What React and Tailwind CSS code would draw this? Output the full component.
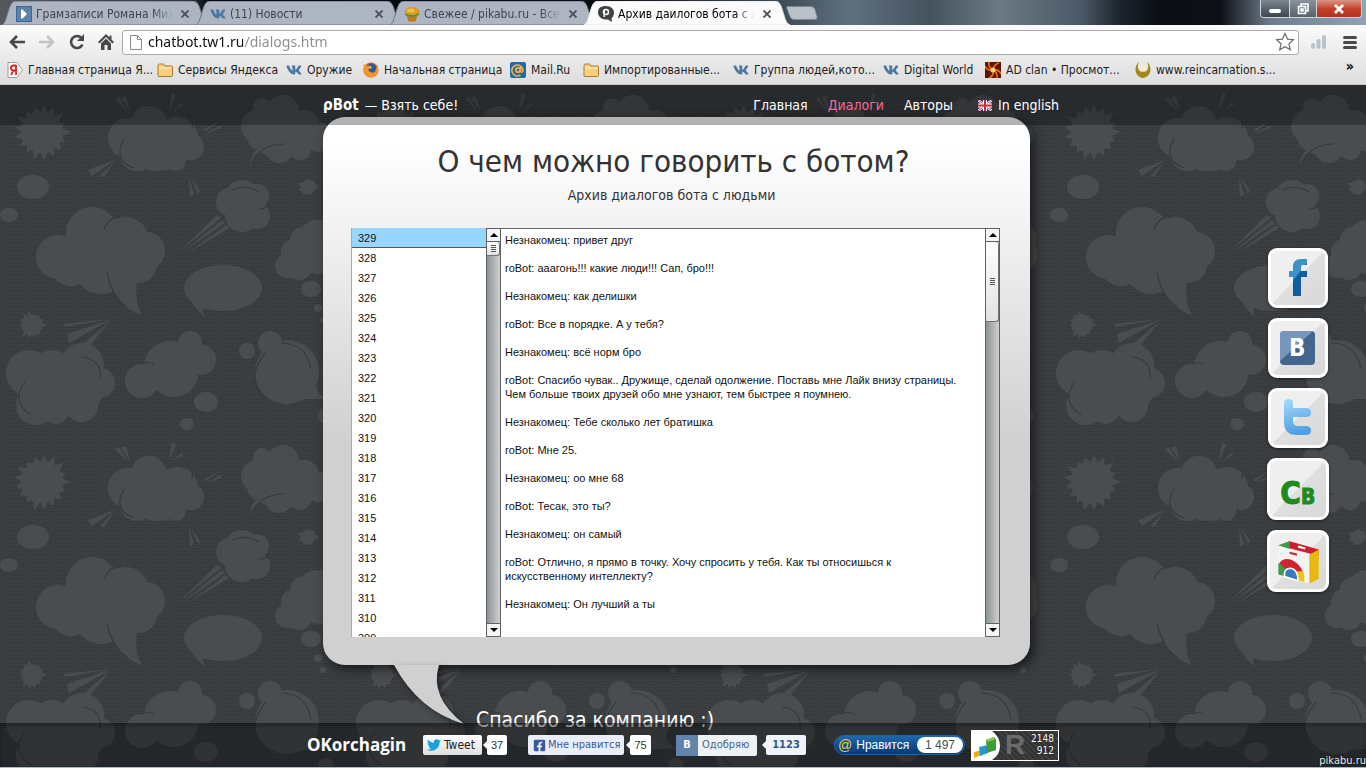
import { useState } from "react";
import clsx from "clsx";
import { FaVk, FaTwitter, FaFacebookSquare } from "react-icons/fa";

const tabs = [
  { title: "Грамзаписи Романа Михайлова", icon: "play" },
  { title: "(11) Новости", icon: "vk" },
  { title: "Свежее / pikabu.ru - Все", icon: "cake" },
  { title: "Архив даилогов бота с людьми", icon: "chat", active: true },
];

const bookmarks = [
  { title: "Главная страница Я...", icon: "yandex", width: "w-[150px]" },
  { title: "Сервисы Яндекса", icon: "folder", width: "w-[129px]" },
  { title: "Оружие", icon: "vk", width: "w-[77px]" },
  { title: "Начальная страница", icon: "firefox", width: "w-[147px]" },
  { title: "Mail.Ru", icon: "mail", width: "w-[73px]" },
  { title: "Импортированные...", icon: "folder", width: "w-[150px]" },
  { title: "Группа людей,кото...", icon: "vk", width: "w-[150px]" },
  { title: "Digital World", icon: "vk", width: "w-[102px]" },
  { title: "AD clan • Просмот...", icon: "fire", width: "w-[150px]" },
  { title: "www.reincarnation.s...", icon: "wreath", width: "w-[150px]" },
];

const dialogs = Array.from({ length: 21 }, (_, i) => 329 - i);

const messages = [
  "Незнакомец: привет друг",
  "roBot: ааагонь!!! какие люди!!! Сап, бро!!!",
  "Незнакомец: как делишки",
  "roBot: Все в порядке. А у тебя?",
  "Незнакомец: всё норм бро",
  "roBot: Спасибо чувак.. Дружище, сделай одолжение. Поставь мне Лайк внизу страницы. Чем больше твоих друзей обо мне узнают, тем быстрее я поумнею.",
  "Незнакомец: Тебе сколько лет братишка",
  "roBot: Мне 25.",
  "Незнакомец: оо мне 68",
  "roBot: Тесак, это ты?",
  "Незнакомец: он самый",
  "roBot: Отлично, я прямо в точку. Хочу спросить у тебя. Как ты относишься к искусственному интеллекту?",
  "Незнакомец: Он лучший а ты",
];

export default function App() {
  return (
    <div className="flex min-h-screen flex-col overflow-hidden bg-[#3a3f42] font-['DejaVu_Sans_Condensed','Noto_Sans',sans-serif]">
      <TabStrip />
      <Toolbar />
      <BookmarksBar />
      <div className="relative flex-1 overflow-hidden border-b border-[#a9b6cc]">
        <Wallpaper />
        <main className="relative mx-auto max-w-[752px] pt-8">
          <Bubble />
        </main>
        <SiteHeader />
        <ShareLinks />
        <SiteFooter />
        <span className="absolute right-0 bottom-0 text-[11px] leading-3 text-[#eee] [text-shadow:0_0_2px_#000]">
          pikabu.ru
        </span>
      </div>
    </div>
  );
}

function TabStrip() {
  return (
    <div className="flex h-[25px] bg-[linear-gradient(90deg,#55585c_0,#30343a_190px,#05070d_210px,#0a0d14_590px,#3d4b57_780px,#5f7080_850px,#46535f_930px,#6c7882_1000px,#4c5a68_1080px,#1c242d_1120px,#0a0e13_1160px,#0d1014_1220px,#6d7c8d_1270px,#8fa3b8_100%)] pl-[2px]">
      <div className="flex min-w-0">
        {tabs.map((tab) => (
          <Tab key={tab.title} {...tab} />
        ))}
      </div>
      <button aria-label="Новая вкладка" className="mt-[6px] ml-2 h-[14px] w-8">
        <svg viewBox="0 0 32 14" className="size-full">
          <path d="M2 .5h23q3 0 4 3l2 7q1 3-2 3H8q-3 0-4-3L1 3Q0 .5 2 .5z" fill="#b9c0c8" stroke="#7b8790" />
        </svg>
      </button>
      <div className="mr-1 ml-auto flex h-[18px] overflow-hidden rounded-b border border-t-0 border-[#cfd6dd]">
        <button aria-label="Свернуть" className="flex w-7 items-center justify-center bg-linear-to-b from-[#7e8791] to-[#3c444d]">
          <span className="mt-1 h-1 w-3 rounded-xs bg-white" />
        </button>
        <button aria-label="Восстановить" className="flex w-7 items-center justify-center border-x border-[#cfd6dd] bg-linear-to-b from-[#8a939b] to-[#59626b]">
          <svg viewBox="0 0 12 12" className="size-3" fill="none" stroke="#fff" strokeWidth="1.6">
            <path d="M4 3V1h7v7H9" />
            <path d="M1.5 3.5h7v7h-7zM4 6h2v2H4z" />
          </svg>
        </button>
        <button aria-label="Закрыть" className="flex w-11 items-center justify-center bg-linear-to-b from-[#dc9483] via-[#c4422a] to-[#b23420]">
          <svg viewBox="0 0 12 10" className="h-[10px] w-3" stroke="#fff" strokeWidth="2.8">
            <path d="M2 1l8 8M10 1L2 9" />
          </svg>
        </button>
      </div>
    </div>
  );
}

function Tab({ title, icon, active }) {
  return (
    <div className={clsx("relative h-full w-[194px]", active && "z-10")}>
      <svg viewBox="0 0 206 24" preserveAspectRatio="none" className="absolute top-[1px] left-0 h-6 w-[206px]">
        <path
          d="M0 24C5 22 6 4 11 1Q12 0 15 0H191Q195 0 197 5C201 16 201 22 206 24Z"
          fill={active ? "#fbfbfb" : "#acb5c1"}
          stroke={active ? "#dfe2e5" : "#6e7781"}
        />
      </svg>
      <div className="relative flex h-full items-center pt-[2px] pl-[14px]">
        <SmallIcon name={icon} />
        <span
          className={clsx(
            "ml-1 w-[137px] overflow-hidden mask-r-from-85% text-xs whitespace-nowrap",
            active ? "text-black" : "text-[#3f454d]"
          )}
        >
          {title}
        </span>
        <button aria-label="Закрыть вкладку" className="ml-2">
          <svg viewBox="0 0 8 8" className="size-2" stroke="#494f57" strokeWidth="1.8">
            <path d="M.5.5l7 7M7.5.5l-7 7" />
          </svg>
        </button>
      </div>
    </div>
  );
}

function Toolbar() {
  return (
    <div className="flex h-[34px] items-center bg-linear-to-b from-[#fbfbfb] to-[#e9e9e9] pr-[9px] pl-2">
      <button aria-label="Назад" className="mr-3">
        <svg viewBox="0 0 18 16" className="h-4 w-[18px]" fill="none" stroke="#484848" strokeWidth="2.6">
          <path d="M9 2L3 8l6 6M3 8h14" />
        </svg>
      </button>
      <button aria-label="Вперёд" className="mr-3">
        <svg viewBox="0 0 18 16" className="h-4 w-[18px]" fill="none" stroke="#c3c3c3" strokeWidth="2.6">
          <path d="M9 2l6 6-6 6M15 8H1" />
        </svg>
      </button>
      <button aria-label="Обновить" className="mr-3">
        <svg viewBox="0 0 18 18" className="size-[18px]">
          <path d="M13.5 5A6 6 0 1 0 14.5 11.5" fill="none" stroke="#484848" strokeWidth="2.6" />
          <path d="M16 1v7H9z" fill="#484848" />
        </svg>
      </button>
      <button aria-label="Домой" className="mr-2">
        <svg viewBox="0 0 16 16" className="size-4" fill="#484848">
          <path d="M8 0L0 8l1.500 1.400L8 3l6.500 6.400L16 8l-2.500-2.500V1.500h-2v2z" />
          <path d="M8 4.500L3 9.500V16h3.500v-5h3v5H13V9.500z" />
        </svg>
      </button>
      <label className="flex h-[25px] flex-1 items-center rounded-[3px] border border-[#aaaaaa] bg-white px-[7px]">
        <svg viewBox="0 0 12 15" className="mr-1 h-[15px] w-3" fill="#fff" stroke="#8a8a8a">
          <path d="M.5.5h7l4 4v10H.5zM7.500.5v4h4" />
        </svg>
        <input
          aria-label="Адрес"
          defaultValue="chatbot.tw1.ru/dialogs.htm"
          className="min-w-0 flex-1 bg-[linear-gradient(90deg,#111_97px,#8c8c8c_97px)] bg-clip-text pl-[2px] font-['Noto_Sans',sans-serif] text-[14px] leading-5 text-transparent outline-none"
        />
        <svg viewBox="0 0 20 20" className="-mr-1 size-5" fill="#fff" stroke="#6c6c6c" strokeWidth="1.2">
          <path d="M10 1.500l2.500 5.600 6 .6-4.500 4.100 1.300 6L10 14.700l-5.300 3.100 1.300-6L1.500 7.700l6-.6z" />
        </svg>
      </label>
      <svg viewBox="0 0 16 14" className="ml-3 h-[14px] w-4" fill="#b9c2cb">
        <rect x="0" y="8" width="4" height="6" rx="2" />
        <rect x="5.500" y="4" width="4" height="10" rx="2" />
        <rect x="11" y="0" width="4" height="14" rx="2" />
      </svg>
      <button aria-label="Меню" className="ml-4 flex w-[14px] flex-col gap-[2px]">
        <span className="h-[3px] rounded-xs bg-[#4b4b4b]" />
        <span className="h-[3px] rounded-xs bg-[#4b4b4b]" />
        <span className="h-[3px] rounded-xs bg-[#4b4b4b]" />
      </button>
    </div>
  );
}

function BookmarksBar() {
  return (
    <nav className="flex h-[26px] items-center border-b border-[#c9c9c9] bg-linear-to-b from-[#e9e9e9] to-[#dedede] pb-[3px] pl-[7px]">
      {bookmarks.map((b) => (
        <a key={b.title} href="#" className={clsx("flex shrink-0 items-center gap-[5px] text-xs whitespace-nowrap text-[#1c1c1c]", b.width)}>
          <SmallIcon name={b.icon} />
          {b.title}
        </a>
      ))}
      <button aria-label="Другие закладки" className="mr-3 ml-auto pb-2 text-sm leading-none font-bold">
        »
      </button>
    </nav>
  );
}

function SmallIcon({ name }) {
  if (name === "vk") return <FaVk className="size-4 shrink-0 text-[#4d76a1]" />;
  return (
    <svg viewBox="0 0 16 16" className="size-4 shrink-0">
      {name === "play" && (
        <>
          <rect x=".5" y=".5" width="15" height="15" fill="#5a82ab" stroke="#3e668f" />
          <path d="M5 3.500l1.500 0 4.500 4.500-4.500 4.500H5z" fill="#fff" />
        </>
      )}
      {name === "cake" && (
        <>
          <path d="M2 8h12l-2.500 7.500h-7z" fill="#b97a23" />
          <ellipse cx="8" cy="6" rx="7.500" ry="5" fill="#d99a2b" />
          <path d="M1 8q7 4 14 0" stroke="#4c9a2a" strokeWidth="2" fill="none" />
          <ellipse cx="7" cy="4.500" rx="4" ry="2" fill="#efc04e" />
        </>
      )}
      {name === "chat" && (
        <>
          <path d="M8 0c5 0 8 3 8 6.500S14 12 13.500 12.500L14 16l-4-2.500C4 14 0 11 0 6.500S3 0 8 0z" fill="#3e4345" />
          <circle cx="8" cy="6" r="2.500" fill="none" stroke="#fff" strokeWidth="1.500" />
          <path d="M6.200 5v6" stroke="#fff" strokeWidth="1.500" />
        </>
      )}
      {name === "yandex" && (
        <>
          <path d="M1 .5h9l5.500 7.500-5.500 7.500H1z" fill="#fff" stroke="#9c9c9c" />
          <path d="M9 3v10M9 3.500H6.500a2.500 2.500 0 0 0 0 5H9M6.500 8.500L4 13" fill="none" stroke="#e0201c" strokeWidth="1.800" />
        </>
      )}
      {name === "folder" && (
        <>
          <path d="M1 3.500q0-1.500 1.500-1.500h4l1.500 2h6.500q1 0 1 1v8.500q0 1-1 1H2q-1 0-1-1z" fill="#f8d07c" stroke="#a87a34" />
          <path d="M2 6h12.500" stroke="#fff0c4" />
        </>
      )}
      {name === "firefox" && (
        <>
          <circle cx="8" cy="8" r="7.500" fill="#d9641a" />
          <circle cx="8.500" cy="6.500" r="5" fill="#2b5d9b" />
          <path d="M1 2l3 2q3-1 4 1l-3 3q3 4 7 2l2-6q3 5-1 9T4 14Q0 11 .5 6z" fill="#f0962a" />
          <path d="M6 4l3 1-2 2z" fill="#fbd34c" />
        </>
      )}
      {name === "mail" && (
        <>
          <rect width="16" height="16" rx="2" fill="#1f6aa8" />
          <circle cx="8" cy="8" r="2.200" fill="none" stroke="#f5b13c" strokeWidth="1.800" />
          <path d="M10.500 5v4.200q1 2 2.300.2A5.500 5.500 0 1 0 10.500 13" fill="none" stroke="#f5b13c" strokeWidth="1.600" />
        </>
      )}
      {name === "fire" && (
        <>
          <rect width="16" height="16" fill="#5e1403" />
          <g fill="none" stroke="#e87410" strokeWidth="1.600">
            <path d="M8 8Q9 2 14 1M8 8q6-1 8 4M8 8q1 6-4 8M8 8Q2 9 0 4M8 8Q3 5 4 0M8 8q5 3 4 8" />
          </g>
          <circle cx="8" cy="8" r="2.500" fill="#ffd264" />
        </>
      )}
      {name === "wreath" && (
        <>
          <path d="M4 0C-2 5 0 15 8 16 16 15 18 5 12 0q3 6-1 9.500H5Q1 6 4 0z" fill="#a1871c" />
          <circle cx="8" cy="6" r="3.500" fill="#f3eccf" />
          <path d="M5 10h6v3H5z" fill="#a1871c" />
        </>
      )}
    </svg>
  );
}

// star-like blot used on the wallpaper
const burst = (cx, cy, inner, outer, count) =>
  Array.from({ length: count * 2 }, (_, i) => {
    const r = i % 2 ? inner : outer - ((i * 7) % 5);
    const a = (Math.PI * i) / count;
    return `${(cx + r * Math.cos(a)).toFixed(1)},${(cy + r * Math.sin(a)).toFixed(1)}`;
  }).join(" ");

function Wallpaper() {
  return (
    <svg aria-hidden="true" className="absolute inset-0 size-full">
      <defs>
        <pattern id="weave" width="3" height="4" patternUnits="userSpaceOnUse">
          <rect width="3" height="4" fill="#3d4144" />
          <path d="M0 .5h2M1.500 2.500H3M0 2.500h.5" stroke="#323639" />
        </pattern>
        <pattern id="clouds" width="350" height="350" patternUnits="userSpaceOnUse">
          <g fill="#4a4d50">
            <polygon points={burst(42, 47, 20, 29, 17)} />
            <circle cx="42" cy="47" r="21" />
            {/* puffy cloud with rays */}
            <circle cx="128" cy="53" r="20" />
            <circle cx="149" cy="39" r="18" />
            <circle cx="177" cy="53" r="21" />
            <circle cx="191" cy="62" r="13" />
            <circle cx="137" cy="69" r="17" />
            <ellipse cx="158" cy="64" rx="32" ry="22" />
            <circle cx="176" cy="76" r="10" />
            <path d="M115 14l13 13-9-15zM121 13l9 13-4-15zM172 7l-3 19 7-16zM181 18l-9 9 12-8zM203 45l18-10-15 11zM206 48l15-8v3zM88 85l27-10-23 16zM100 91l14-14-10 15zM189 93l1 19 4-3zM191 93l7 16 2-3z" />
            {/* cloud with a hook */}
            <circle cx="262" cy="22" r="9" />
            <circle cx="283" cy="26" r="16" />
            <circle cx="257" cy="41" r="16" />
            <circle cx="304" cy="40" r="15" />
            <circle cx="318" cy="52" r="15" />
            <ellipse cx="283" cy="52" rx="36" ry="20" />
            <circle cx="279" cy="64" r="14" />
            <circle cx="300" cy="64" r="11" />
            <path d="M250 82q0-20 20-22l-6 4q-12 5-14 18z" />
            <ellipse cx="33" cy="102" rx="16" ry="12" />
            <ellipse cx="9" cy="130" rx="9" ry="7" />
            {/* large speech cloud */}
            <circle cx="92" cy="148" r="26" />
            <circle cx="58" cy="172" r="22" />
            <circle cx="125" cy="156" r="24" />
            <circle cx="146" cy="166" r="19" />
            <circle cx="138" cy="179" r="19" />
            <circle cx="71" cy="180" r="21" />
            <ellipse cx="101" cy="182" rx="27" ry="27" />
            <path d="M107 188q8 34 35 42-8-12-5-34z" />
            {/* flying puff */}
            <circle cx="242" cy="112" r="17" />
            <circle cx="230" cy="117" r="14" />
            <circle cx="257" cy="111" r="12" />
            <circle cx="257" cy="131" r="13" />
            <circle cx="242" cy="130" r="17" />
            <path d="M180 166l37-36 4 3zM183 167l39-32 3 3zM188 168l38-28 3 3z" />
            <polygon points={burst(308, 102, 7, 11, 9)} />
            {/* thought cloud */}
            <circle cx="317" cy="154" r="19" />
            <circle cx="303" cy="155" r="13" />
            <circle cx="294" cy="167" r="13" />
            <circle cx="287" cy="181" r="12" />
            <circle cx="299" cy="182" r="13" />
            <circle cx="318" cy="170" r="19" />
            <ellipse cx="311" cy="204" rx="10" ry="8" />
            <circle cx="318" cy="223" r="4" />
            <circle cx="323" cy="235" r="3" />
            <ellipse cx="223" cy="203" rx="39" ry="23" />
            <path d="M190 213q6 12 15 19-3-5-1-14z" />
            <polygon points={burst(32, 240, 10, 15, 14)} />
            <path d="M64 239l47-5-46 8zM67 249l43-14-41 23zM83 259l27-23-21 26z" />
            {/* lower clouds */}
            <circle cx="29" cy="288" r="23" />
            <circle cx="52" cy="283" r="18" />
            <circle cx="82" cy="280" r="22" />
            <circle cx="100" cy="298" r="15" />
            <circle cx="36" cy="320" r="20" />
            <ellipse cx="64" cy="305" rx="40" ry="26" />
            <circle cx="82" cy="321" r="16" />
            <circle cx="56" cy="327" r="12" />
            <circle cx="142" cy="296" r="17" />
            <circle cx="170" cy="282" r="26" />
            <circle cx="190" cy="258" r="12" />
            <circle cx="201" cy="275" r="15" />
            <circle cx="174" cy="288" r="24" />
            <ellipse cx="206" cy="317" rx="12" ry="10" />
            <ellipse cx="187" cy="339" rx="7" ry="6" />
            <circle cx="247" cy="266" r="8" />
            <circle cx="270" cy="258" r="12" />
            <circle cx="287" cy="287" r="32" />
            <path d="M314 270v25q2 14 12 19h-24z" />
            <circle cx="326" cy="331" r="8" />
          </g>
          <g fill="none" stroke="#35393c" strokeWidth="1.200">
            <path d="M134 83q-22-8-10-29M176 24q19 1 16 20" />
            <path d="M104 144q5-13 17-12M107 188q6 26 20 34" />
            <path d="M232 105q14-6 27 2M259 124q8 0 11-6" />
            <path d="M252 79q8-20 32-20" />
            <path d="M31 330q-21-14-6-33M82 272q20 2 18 22M142 279q6-3 12 0" />
            <path d="M263 312q-18-20 3-45M281 258q25 0 30 26" />
          </g>
        </pattern>
      </defs>
      <rect width="100%" height="100%" fill="url(#weave)" />
      <rect width="100%" height="100%" fill="url(#clouds)" />
    </svg>
  );
}

function SiteHeader() {
  return (
    <header className="absolute inset-x-0 top-0 h-10 bg-black/30 text-white">
      <div className="mx-auto flex h-full max-w-[752px] items-center pl-4 text-sm leading-5">
        <a href="#" className="flex items-center">
          <b className="mr-[6px] text-[15px]">ρBot</b>
          — Взять себе!
        </a>
        <nav className="ml-auto flex gap-5">
          <a href="#">Главная</a>
          <a href="#" className="text-[#f4689a]">Диалоги</a>
          <a href="#">Авторы</a>
          <a href="#" className="ml-[5px] flex items-center gap-[6px]">
            <svg viewBox="0 0 14 11" className="h-[11px] w-[14px]">
              <rect width="14" height="11" fill="#27337a" />
              <path d="M0 0l14 11M14 0L0 11" stroke="#fff" strokeWidth="2.400" />
              <path d="M0 0l14 11M14 0L0 11" stroke="#d43b54" />
              <path d="M7 0v11M0 5.500h14" stroke="#fff" strokeWidth="4" />
              <path d="M7 0v11M0 5.500h14" stroke="#d0243f" strokeWidth="2" />
            </svg>
            In english
          </a>
        </nav>
      </div>
    </header>
  );
}

function Bubble() {
  return (
    <>
      <section className="ml-4 max-w-[707px] rounded-[22px] bg-linear-to-b from-white from-5% to-[#d0d0d0] to-60% pr-[30px] pb-7 pl-7 shadow-[4px_4px_12px_rgba(0,0,0,0.6)]">
        <h1 className="pt-6 pr-1 text-center text-[31px] leading-10 text-[#333]">О чем можно говорить с ботом?</h1>
        <p className="pt-1 pr-2 pb-[23px] text-center text-sm leading-5 text-[#333]">Архив диалогов бота с людьми</p>
        <Archive />
      </section>
      <div className="flex">
        <svg viewBox="0 0 72 60" className="ml-[87px] h-[60px] w-[72px] shrink-0 drop-shadow-[3px_3px_3px_rgba(0,0,0,0.5)]">
          <path d="M0 0Q25 46 70 59Q35 32 45 0z" fill="#d0d0d0" />
        </svg>
        <p className="ml-[10px] pt-10 text-[21px] leading-[30px] text-white">Спасибо за компанию :)</p>
      </div>
    </>
  );
}

function Archive() {
  const [selected, setSelected] = useState(329);
  return (
    <div className="flex h-[409px] bg-white font-['Liberation_Sans',Arial,sans-serif] text-[11px] text-[#111]">
      <ul className="w-[135px] shrink-0 overflow-hidden border-l border-[#aaa]">
        {dialogs.map((id) => (
          <li key={id}>
            <button
              onClick={() => setSelected(id)}
              className={clsx(
                "block h-5 w-full border-b pl-[6px] text-left leading-4",
                id === selected ? "border-[#555] bg-[#99d6ff]" : "border-transparent"
              )}
            >
              {id}
            </button>
          </li>
        ))}
      </ul>
      <ScrollBar thumb="h-[14px]" />
      <div className="min-w-0 flex-1 space-y-[14px] border-t border-[#666] pt-1 pr-4 pl-1 leading-[14px]">
        {messages.map((m) => (
          <p key={m}>{m}</p>
        ))}
      </div>
      <ScrollBar thumb="h-[80px]" />
    </div>
  );
}

function ScrollBar({ thumb }) {
  return (
    <div className="flex w-[15px] shrink-0 flex-col border-x border-t border-[#5c6165] bg-linear-to-r from-[#8d9395] to-[#d0d0d0]">
      <button aria-label="Вверх" className="flex h-[13px] shrink-0 items-center justify-center border-b border-[#5c6165] bg-[#f4f4f4]">
        <svg viewBox="0 0 8 4" className="h-1 w-2"><path d="M0 4l4-4 4 4z" /></svg>
      </button>
      <div className={clsx("flex shrink-0 flex-col items-center justify-center gap-px rounded-r-[3px] border-r border-b border-[#6f7477] bg-linear-to-b from-white to-[#e2e2e2]", thumb)}>
        <span className="h-px w-[5px] bg-[#555]" />
        <span className="h-px w-[5px] bg-[#555]" />
        <span className="h-px w-[5px] bg-[#555]" />
        <span className="h-px w-[5px] bg-[#555]" />
      </div>
      <button aria-label="Вниз" className="mt-auto flex h-[14px] shrink-0 items-center justify-center border-y border-[#5c6165] bg-[#f4f4f4]">
        <svg viewBox="0 0 8 4" className="h-1 w-2"><path d="M0 0l4 4 4-4z" /></svg>
      </button>
    </div>
  );
}

function ShareLinks() {
  return (
    <aside className="absolute top-[163px] right-[37px] flex flex-col items-center gap-[10px]">
      <ShareTile label="Facebook">
        <defs>
          <linearGradient id="fb" x2=".6" y2="1">
            <stop offset=".5" stopColor="#3d93c9" />
            <stop offset=".55" stopColor="#0f5d9e" />
          </linearGradient>
        </defs>
        <path d="M25 48V29h-4v-6h4v-4q0-8 8-8h6v6h-4q-2 0-2 2v4h6v6h-6v19z" fill="url(#fb)" />
      </ShareTile>
      <ShareTile label="ВКонтакте">
        <rect x="12" y="13" width="35" height="34" rx="4" fill="#44658f" />
        <path d="M12 43V17q0-4 4-4h29z" fill="#7896bb" />
        <text x="21" y="38" fill="#fff" fontSize="24" fontWeight="bold" fontFamily="DejaVu Sans Condensed, sans-serif">B</text>
      </ShareTile>
      <ShareTile label="Twitter">
        <defs>
          <linearGradient id="tw" x2=".2" y2="1">
            <stop offset="0" stopColor="#a5dcfb" />
            <stop offset="1" stopColor="#4f9fe4" />
          </linearGradient>
        </defs>
        <path d="M16 15q0-4 4.500-4t4.500 4v5h13q5 0 5 4.500t-5 4.500H25v4q0 5 5 5h8q5 0 5 4.500t-5 4.500h-9q-13 0-13-13z" fill="url(#tw)" />
      </ShareTile>
      <ShareTile label="Спрашивай" large>
        <text x="13" y="44" fill="#1f8a1f" stroke="#1f8a1f" strokeWidth="1" fontSize="30" fontWeight="bold" fontFamily="DejaVu Sans Condensed, sans-serif">
          С<tspan fontSize="20">В</tspan>
        </text>
      </ShareTile>
      <ShareTile label="Chrome Web Store" large>
        <path d="M11 15l11-4 28 8v6z" fill="#c8202c" />
        <path d="M11 15l11-4v8z" fill="#3f9b4b" />
        <path d="M11 15l30 9v28l-30-9z" fill="#f3f3f3" />
        <path d="M41 24l9-5v28l-9 5z" fill="#e7b90e" />
        <path d="M30 16l7 2" stroke="#fff" strokeWidth="2" />
        <path d="M22 22l7 2" stroke="#c8202c" strokeWidth="2" />
        <path d="M11 43V32l8 3 4 11z" fill="#3f9b4b" />
        <path d="M12 32q4-6 12-3 9 4 11 13H22z" fill="#cd2630" />
        <path d="M25 40h10q2 5 1 10l-12-3z" fill="#f2c014" />
        <path d="M17 45q-1-8 6-8 7 1 7 12z" fill="#3a79bd" stroke="#fff" strokeWidth="1.500" />
      </ShareTile>
    </aside>
  );
}

function ShareTile({ label, large, children }) {
  return (
    <a
      href="#"
      aria-label={label}
      className={clsx(
        "block rounded-[9px] border-[3px] border-white bg-[linear-gradient(135deg,#efefef_50%,#dfdfdf_50%,#d8d8d8)] shadow-[0_1px_3px_rgba(0,0,0,0.5)]",
        large ? "size-[62px]" : "size-[60px]"
      )}
    >
      <svg viewBox="3 3 54 54" className="size-full">{children}</svg>
    </a>
  );
}

function SiteFooter() {
  return (
    <footer className="absolute inset-x-0 bottom-0 h-11 bg-black/35 shadow-[inset_0_2px_4px_rgba(0,0,0,0.3)]">
      <div className="mx-auto flex h-full max-w-[752px] items-center font-['Liberation_Sans',Arial,sans-serif]">
        <a href="#" className="w-[116px] font-['Open_Sans',sans-serif] text-[17px] font-bold text-white">OKorchagin</a>
        <button className="flex h-5 w-[59px] items-center gap-[3px] rounded-xs bg-linear-to-b from-white to-[#dedede] pl-1 font-['DejaVu_Sans_Condensed',sans-serif] text-xs text-[#222]">
          <FaTwitter className="size-[14px] shrink-0 text-[#1ba1e2]" />
          Tweet
        </button>
        <Count className="ml-[5px] w-5 bg-white text-[#333]">37</Count>
        <button className="ml-[21px] flex h-5 w-24 items-center gap-[2px] rounded-xs bg-[#e8edf8] pl-[5px] font-['DejaVu_Sans_Condensed',sans-serif] text-[11px] whitespace-nowrap text-[#3b5998]">
          <FaFacebookSquare className="size-[13px] shrink-0" />
          Мне нравится
        </button>
        <Count className="ml-[6px] w-[21px] bg-white text-[#333]">75</Count>
        <button className="ml-[25px] flex h-[21px] w-[81px] items-center overflow-hidden rounded-xs bg-[#eef2f6] font-['DejaVu_Sans_Condensed',sans-serif] text-[11px] text-[#46678f]">
          <span className="mr-1 flex h-full w-[22px] items-center justify-center bg-[#6183ac] font-bold text-white">B</span>
          Одобряю
        </button>
        <Count className="ml-[9px] w-10 bg-[#eef4f9] font-['DejaVu_Sans_Condensed',sans-serif] font-bold text-[#36597f]">1123</Count>
        <button className="ml-7 flex h-5 w-[131px] items-center rounded-full border border-[#1a64ab] bg-linear-to-b from-[#1e68ac] to-[#053a76] pr-px pl-[3px] text-xs text-white">
          <span className="mr-1 text-sm leading-none text-[#f2ce35]">@</span>
          Нравится
          <span className="ml-auto rounded-full bg-white px-2 leading-4 text-[#3f4f5f]">1 497</span>
        </button>
        <div className="ml-auto flex h-[31px] w-[88px] items-center border border-white bg-[repeating-linear-gradient(45deg,#333_0_2px,#404040_2px_4px)] text-white">
          <svg viewBox="0 0 29 29" className="size-[29px] shrink-0">
            <path d="M0 0h20q8 6 8 15t-8 14H0z" fill="#fff" />
            <path d="M2 21l8-2v5l-8 3z" fill="#f0a920" />
            <path d="M7 16l9-2v8l-8 3z" fill="#2797d1" />
            <path d="M14 9l8-3 2 2v11l-9 3z" fill="#3f9d35" />
            <path d="M14 9l8-3 2 2-8 3z" fill="#8cc653" />
          </svg>
          <span aria-hidden="true" className="ml-1 text-[28px] leading-7 font-bold text-[#6a6a6a]">R</span>
          <p className="ml-auto pr-1 text-right font-['DejaVu_Sans_Condensed',sans-serif] text-[10px] leading-3 [text-shadow:0_0_2px_#000]">
            2148
            <br />
            912
          </p>
        </div>
      </div>
    </footer>
  );
}

function Count({ className, children }) {
  return (
    <span className={clsx("relative flex h-5 items-center justify-center rounded-xs text-[11px]", className)}>
      <svg viewBox="0 0 4 8" className="absolute top-[6px] -left-1 h-2 w-1">
        <path d="M4 0v8L0 4z" fill="#fff" />
      </svg>
      {children}
    </span>
  );
}
